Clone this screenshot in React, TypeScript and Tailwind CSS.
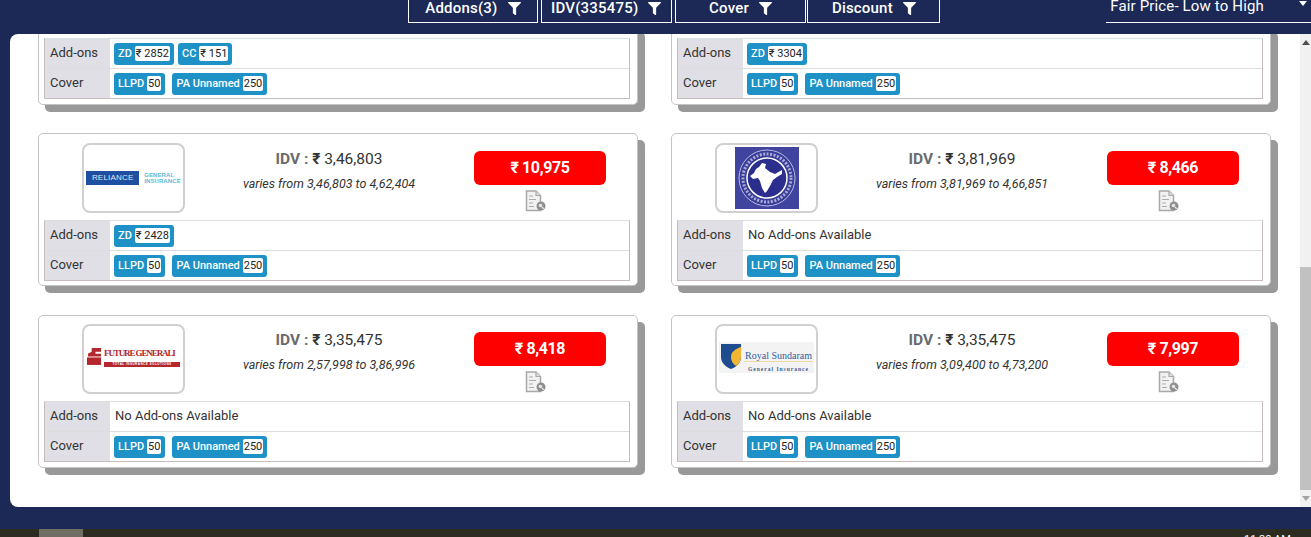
import React from 'react';
import { FaFilter } from 'react-icons/fa';

const font = 'font-["Roboto","Noto_Sans",sans-serif]';

const Badge = ({ label, value }: { label: string; value: string }) => (
    <span className="inline-flex h-[22px] items-center rounded-[3px] bg-[#1e92c6] px-[4px] text-[11px] font-medium text-white">
        <span className="mr-[3px] leading-[15px]">{label}</span>
        <span className="rounded-[2px] bg-white px-[1px] text-[11px] leading-[15px] font-normal text-[#222]">{value}</span>
    </span>
);

const DocIcon = () => (
    <svg width="21" height="22" viewBox="0 0 21 22" className="ml-[51px]">
        <path d="M1.500 1h9.500l4.500 4.500V20.500H1.500z" fill="#f2f2f2" stroke="#a8a8a8" strokeWidth="1.500" />
        <path d="M11 1v4.500h4.500" fill="#ddd" stroke="#a8a8a8" strokeWidth="1.200" />
        <path d="M4 6h4M4 9.500h7M4 13h4M4 16.500h5" stroke="#ababab" strokeWidth="1.200" />
        <circle cx="16" cy="16" r="4.500" fill="#8f8f8f" />
        <circle cx="15.500" cy="15.500" r="1.800" fill="#e4e4e4" />
        <path d="M17 17l1.800 1.800" stroke="#eee" strokeWidth="1.200" />
    </svg>
);

const RelianceLogo = () => (
    <div className="flex items-center">
        <div className="flex h-[14px] w-[53px] items-center justify-center bg-[#1f4fa0] font-['Liberation_Sans',sans-serif] text-[8px] tracking-[0.2px] text-[#dfe8f7]">RELIANCE</div>
        <div className="ml-[5px] font-['Liberation_Sans',sans-serif] text-[6px] leading-[6.500px] font-bold tracking-[0.1px] text-[#62b8d4]">GENERAL<br />INSURANCE</div>
    </div>
);

const NewIndiaLogo = () => (
    <svg width="64" height="62" viewBox="0 0 64 62">
        <rect width="64" height="62" fill="#41449f" />
        <circle cx="32" cy="31" r="28" fill="#3a3d98" stroke="#b9bbe2" strokeWidth="1" />
        <circle cx="32" cy="31" r="24" fill="none" stroke="#a9abd9" strokeWidth="3" strokeDasharray="2 1.500" />
        <circle cx="32" cy="31" r="20" fill="#2b2e8c" stroke="#fff" strokeWidth="1.500" />
        <path d="M27 16L31 17L30 21L35 25L40 27L47 23L47 27L42 30L38 33L35 39L32 44L30 46L27 41L25 34L23 31L18 32L15 29L19 26L21 22L24 20Z" fill="#fff" />
    </svg>
);

const GeneraliLogo = () => (
    <div className="mb-[4px] flex items-start">
        <svg width="15" height="19" viewBox="0 0 16 20" className="shrink-0">
            <path d="M5 1h10v4H9v2h6v3H1V7l4-2z" fill="#b3272d" />
            <rect x="0" y="11" width="15" height="8" fill="#b3272d" />
        </svg>
        <div className="ml-[2px] w-[76px]">
            <div className="font-['Liberation_Serif',serif] text-[9px] leading-[12px] font-bold tracking-[-1.100px] whitespace-nowrap text-[#b3272d]">FUTURE GENERALI</div>
            <div className="mt-[3px] h-[5px] overflow-hidden bg-[#b3272d] text-center font-['Liberation_Sans',sans-serif] text-[3px] leading-[5px] font-bold tracking-[0.500px] whitespace-nowrap text-white">TOTAL INSURANCE SOLUTIONS</div>
        </div>
    </div>
);

const SundaramLogo = () => (
    <div className="mb-[4px] flex h-[31px] w-[95px] items-start bg-[#f3f3f3] pt-[2px] pl-[2px]">
        <svg width="20" height="25" viewBox="0 0 20 25" className="shrink-0">
            <path d="M0 0h20v13c0 6-5 10-10 12C5 23 0 19 0 13z" fill="#1f4b8f" />
            <path d="M20 3v10c0 4-2 7-5 9-3-2-5-5-5-9 0-5 4-8 10-10z" fill="#f2b632" />
        </svg>
        <div className="ml-[3px] w-[69px] pt-[6px] text-center">
            <div className="border-b border-[#eed9a0] font-['Liberation_Serif',serif] text-[10px] leading-[11px] whitespace-nowrap text-[#2f5e9e]">Royal Sundaram</div>
            <div className="mt-[4px] font-['Liberation_Serif',serif] text-[5.500px] leading-[6px] font-bold tracking-[1px] whitespace-nowrap text-[#3d5d8c]">General Insurance</div>
        </div>
    </div>
);

type Plan = {
    logo?: React.ReactNode;
    idv?: string;
    range?: string;
    price?: string;
    tight?: boolean;
    addons: { label: string; value: string }[];
};

const CoverRows = ({ addons }: { addons: Plan['addons'] }) => (
    <div className="ml-[5px] mr-[7px] border border-t-[#ddd] border-r-[#c8bcbc] border-b-[#c8bcbc] border-l-[#c8bcbc]">
        <div className="flex h-[30px] border-b border-[#ddd]">
            <div className="flex w-[65px] shrink-0 items-center bg-[#e0dfe5] pb-[1px] pl-[5px] text-[13px] text-[#333]">Add-ons</div>
            <div className="flex items-center gap-[4px] pl-[4px] text-[13px] text-[#333]">
                {addons.length === 0 && <span className="pb-[1px] pl-[1px]">No Add-ons Available</span>}
                {addons.map((a) => <Badge key={a.label} label={a.label} value={a.value} />)}
            </div>
        </div>
        <div className="flex h-[29px]">
            <div className="flex w-[65px] shrink-0 items-center bg-[#e0dfe5] pb-[1px] pl-[5px] text-[13px] text-[#333]">Cover</div>
            <div className="flex items-center gap-[7px] pl-[4px]">
                <Badge label="LLPD" value="50" />
                <Badge label="PA Unnamed" value="250" />
            </div>
        </div>
    </div>
);

const PlanCard = ({ logo, idv, range, price, addons, tight }: Plan) => (
    <div className="h-[153px] w-[600px] rounded-[5px] border border-[#c4c4c4] bg-white shadow-[7px_7px_0_#999]">
        <div className={tight ? 'flex h-[85px] pt-[8px]' : 'flex h-[86px] pt-[9px]'}>
            <div className="ml-[43px] flex h-[70px] w-[103px] items-center justify-center overflow-hidden rounded-[8px] border-2 border-[#d0d0d0] bg-white">{logo}</div>
            <div className="ml-[54px] w-[180px] pt-[6px] text-center">
                <div className="text-[15.500px] leading-[20px] whitespace-nowrap text-[#333]"><span className="font-bold text-[#6b6b6b]">IDV :</span> <span className="font-bold">₹</span> {idv}</div>
                <div className="mt-[7px] text-[12.500px] leading-[16px] whitespace-nowrap text-[#333] italic">varies from {range}</div>
            </div>
            <div className="ml-[55px] w-[132px] pt-[8px]">
                <div className="flex h-[34px] items-center justify-center rounded-[6px] bg-[#ff0000] text-[16px] font-bold tracking-[-0.400px] text-white">₹ {price}</div>
                <div className="mt-[5px]"><DocIcon /></div>
            </div>
        </div>
        <CoverRows addons={addons} />
    </div>
);

// first row is scrolled up behind the header, only the table part is left
const ClippedCard = ({ addons }: { addons: Plan['addons'] }) => (
    <div className="-mt-[9px] h-[80px] w-[600px] rounded-[5px] border border-[#c4c4c4] bg-white pt-[12px] shadow-[7px_7px_0_#999]">
        <CoverRows addons={addons} />
    </div>
);

const FilterButton = ({ label, width }: { label: string; width: string }) => (
    <button className={`flex h-[23px] items-center justify-center gap-[10px] border border-t-0 border-white pb-[5px] text-[15px] font-medium tracking-[0.2px] text-white ${width}`}>
        <span>{label}</span>
        <FaFilter className="h-[13px] w-[13px]" />
    </button>
);

export default function App() {
    return (
        <div className={`flex h-[537px] w-[1311px] flex-col overflow-hidden bg-[#1c2957] ${font}`}>
            {/* filtros */}
            <div className="relative flex h-[34px] shrink-0 items-start pl-[408px]">
                <FilterButton label="Addons(3)" width="w-[130px]" />
                <FilterButton label="IDV(335475)" width="ml-[3px] w-[131px]" />
                <FilterButton label="Cover" width="ml-[3px] w-[132px]" />
                <FilterButton label="Discount" width="ml-[1px] w-[133px]" />
                <div className="ml-[166px] flex h-[23px] w-[205px] items-start border-b border-white pl-[4px] text-[15px] leading-[13px] tracking-[0.150px] text-white">
                    <span>Fair Price- Low to High</span>
                    <span className="ml-auto mr-[4px] mt-[1px] h-0 w-0 border-x-[4px] border-t-[5px] border-x-transparent border-t-white" />
                </div>
            </div>

            {/* lista */}
            <div className="ml-[10px] flex h-[473px] w-[1301px] shrink-0 overflow-hidden rounded-l-[8px] bg-white">
                <div className="w-[1290px] pl-[28px]">
                    <div className="flex gap-[33px]">
                        <ClippedCard addons={[{ label: 'ZD', value: '₹ 2852' }, { label: 'CC', value: '₹ 151' }]} />
                        <ClippedCard addons={[{ label: 'ZD', value: '₹ 3304' }]} />
                    </div>
                    <div className="mt-[28px] flex gap-[33px]">
                        <PlanCard logo={<RelianceLogo />} idv="3,46,803" range="3,46,803 to 4,62,404" price="10,975" addons={[{ label: 'ZD', value: '₹ 2428' }]} />
                        <PlanCard logo={<NewIndiaLogo />} idv="3,81,969" range="3,81,969 to 4,66,851" price="8,466" addons={[]} />
                    </div>
                    <div className="mt-[29px] flex gap-[33px]">
                        <PlanCard tight logo={<GeneraliLogo />} idv="3,35,475" range="2,57,998 to 3,86,996" price="8,418" addons={[]} />
                        <PlanCard tight logo={<SundaramLogo />} idv="3,35,475" range="3,09,400 to 4,73,200" price="7,997" addons={[]} />
                    </div>
                </div>
                {/* scrollbar */}
                <div className="flex w-[11px] flex-col bg-[#f1f1f1]">
                    <div className="flex h-[17px] items-center justify-center"><span className="h-0 w-0 border-x-[4px] border-b-[5px] border-x-transparent border-b-[#505050]" /></div>
                    <div className="mt-[216px] h-[223px] bg-[#c1c1c1]" />
                    <div className="mt-auto flex h-[17px] items-center justify-center"><span className="h-0 w-0 border-x-[4px] border-t-[5px] border-x-transparent border-t-[#a3a3a3]" /></div>
                </div>
            </div>

            {/* barra de tareas */}
            <div className="mt-[22px] flex h-[8px] shrink-0 bg-[#2c2c20]">
                <div className="ml-[39px] h-full w-[44px] bg-[#6e6e62]" />
                <div className="ml-[1161px] text-[11px] leading-[22px] whitespace-nowrap text-white">11:30 AM</div>
            </div>
        </div>
    );
}
